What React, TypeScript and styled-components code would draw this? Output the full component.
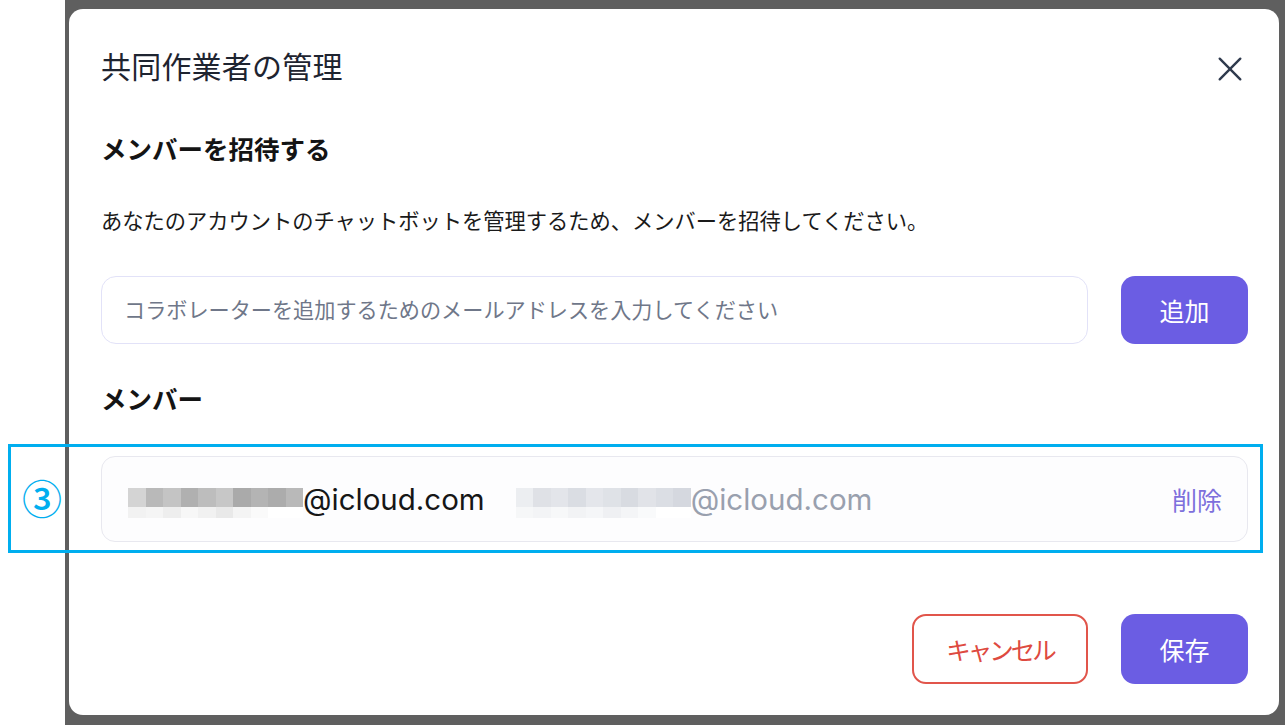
import React from "react";
import styled, { createGlobalStyle } from "styled-components";

const GlobalStyle = createGlobalStyle`
  html, body { margin: 0; padding: 0; background: #ffffff; }
  body { font-family: Inter, "Noto Sans CJK JP", sans-serif; }
  * { box-sizing: border-box; }
`;

const Page = styled.div`
  position: relative;
  width: 1285px;
  height: 725px;
  display: flex;
  overflow: hidden;
  background: #ffffff;
`;

const Gutter = styled.div`
  width: 65px;
  flex: none;
  background: #ffffff;
`;

const Overlay = styled.div`
  flex: 1;
  display: flex;
  background: #5f5f5f;
  padding: 9px 6px 10px 4px;
`;

const Dialog = styled.div`
  flex: 1;
  display: flex;
  flex-direction: column;
  background: #ffffff;
  border-radius: 14px;
  padding: 38px 31px 31px 32px;
  font-family: Inter, "Noto Sans CJK JP", sans-serif;
`;

const TitleRow = styled.div`
  display: flex;
  align-items: center;
  justify-content: space-between;
  height: 40px;
`;

const Title = styled.h1`
  margin: 0;
  font-size: 30px;
  font-weight: 400;
  line-height: 40px;
  color: #1e2430;
  letter-spacing: 0.2px;
`;

const CloseButton = styled.button`
  width: 36px;
  height: 36px;
  display: flex;
  align-items: center;
  justify-content: center;
  background: none;
  border: none;
  padding: 0;
  margin-top: 4px;
  color: #2f3a4d;
  cursor: pointer;
`;

const Heading = styled.h2<{ $mt: number }>`
  margin: ${(p) => p.$mt}px 0 0;
  font-size: 25.5px;
  font-weight: 700;
  line-height: 36px;
  color: #141414;
`;

const Description = styled.p`
  margin: 38px 0 0;
  font-size: 21.25px;
  line-height: 30px;
  color: #1a1a1a;
`;

const InviteRow = styled.div`
  display: flex;
  gap: 33px;
  margin-top: 40px;
`;

const EmailInput = styled.input`
  flex: 1;
  height: 68px;
  border: 1.5px solid #e2e2f8;
  border-radius: 15px;
  padding: 0 22px;
  font-family: Inter, "Noto Sans CJK JP", sans-serif;
  font-size: 21.15px;
  color: #222;
  outline: none;
  &::placeholder {
    color: #6f7789;
  }
`;

const PrimaryButton = styled.button`
  width: 127px;
  height: 68px;
  border: none;
  border-radius: 14px;
  background: #6b5de3;
  color: #ffffff;
  font-family: Inter, "Noto Sans CJK JP", sans-serif;
  font-size: 25px;
  cursor: pointer;
`;

const MemberRow = styled.div`
  margin-top: 38px;
  height: 86px;
  display: flex;
  align-items: center;
  border: 1.5px solid #e8e8ef;
  border-radius: 14px;
  background: #fdfdfe;
  padding: 0 25px 0 26px;
`;

const Emails = styled.div`
  flex: 1;
  display: flex;
  align-items: center;
  gap: 31px;
`;

const Email = styled.span`
  display: inline-flex;
  align-items: center;
`;

const EmailDomain = styled.span<{ $muted?: boolean }>`
  font-family: Inter, sans-serif;
  font-size: 29.5px;
  line-height: 40px;
  color: ${(p) => (p.$muted ? "#99a0ae" : "#161616")};
`;

const Mosaic = styled.span`
  display: inline-flex;
  flex-direction: column;
  margin-top: 8px;
`;

const MosaicBand = styled.span<{ $h: number }>`
  display: flex;
  height: ${(p) => p.$h}px;
`;

const MosaicCell = styled.span<{ $c: string; $w: number }>`
  width: ${(p) => p.$w}px;
  height: 100%;
  background: ${(p) => p.$c};
`;

const DeleteLink = styled.button`
  background: none;
  border: none;
  padding: 0;
  font-family: Inter, "Noto Sans CJK JP", sans-serif;
  font-size: 25px;
  color: #7d70dc;
  cursor: pointer;
`;

const Footer = styled.div`
  margin-top: auto;
  display: flex;
  justify-content: flex-end;
  gap: 33px;
`;

const CancelButton = styled.button`
  width: 176px;
  height: 70px;
  border: 2px solid #e1554b;
  border-radius: 14px;
  background: #ffffff;
  color: #de4a40;
  font-family: Inter, "Noto Sans CJK JP", sans-serif;
  font-size: 24.5px;
  letter-spacing: -3px;
  cursor: pointer;
`;

const SaveButton = styled(PrimaryButton)`
  height: 70px;
`;

const Annotation = styled.div`
  position: absolute;
  left: 8px;
  top: 444px;
  width: 1255px;
  height: 109px;
  border: 3px solid #00aeef;
  pointer-events: none;
`;

const AnnotationNumber = styled.span`
  position: absolute;
  left: 22px;
  top: 475px;
  font-family: "Noto Sans CJK JP", sans-serif;
  font-size: 40px;
  font-weight: 500;
  line-height: 44px;
  color: #00aeef;
`;

type MosaicProps = { top: string[]; bottom: string[]; w: number };

const PixelMosaic: React.FC<MosaicProps> = ({ top, bottom, w }) => (
  <Mosaic aria-hidden>
    <MosaicBand $h={19}>
      {top.map((c, i) => (
        <MosaicCell key={i} $c={c} $w={w} />
      ))}
    </MosaicBand>
    <MosaicBand $h={11}>
      {bottom.map((c, i) => (
        <MosaicCell key={i} $c={c} $w={w} />
      ))}
    </MosaicBand>
  </Mosaic>
);

const darkTop = ["#d4d4d4", "#b9b9b9", "#c4c4c4", "#b0b0b0", "#bdbdbd", "#c7c7c7", "#aaaaaa", "#b4b4b4", "#acacac", "#b9b9b9"];
const darkBottom = ["#f2f2f2", "#f5f5f5", "#eeeeee", "#f7f7f7", "#f1f1f1", "#e9e9e9", "#f4f4f4", "#fafafa", "#ffffff", "#ffffff"];
const lightTop = ["#eceef1", "#dfe1e6", "#e3e5ea", "#dadde3", "#e4e6eb", "#dfe2e7", "#d8dbe1", "#e1e3e8", "#dbdee4", "#d5d8df"];
const lightBottom = ["#f6f7f8", "#f3f4f6", "#f7f8f9", "#f2f3f5", "#f5f6f8", "#eff0f3", "#f4f5f7", "#f9fafb", "#ffffff", "#ffffff"];

const CloseIcon = () => (
  <svg width="26" height="26" viewBox="0 0 24 24" fill="none" stroke="currentColor" strokeWidth="2.2" strokeLinecap="round">
    <path d="M2.5 2.5 L21.5 21.5" />
    <path d="M21.5 2.5 L2.5 21.5" />
  </svg>
);

export default function App() {
  return (
    <>
      <GlobalStyle />
      <Page>
        <Gutter />
        <Overlay>
          <Dialog>
            <TitleRow>
              <Title>共同作業者の管理</Title>
              <CloseButton aria-label="閉じる">
                <CloseIcon />
              </CloseButton>
            </TitleRow>
            <Heading $mt={45}>メンバーを招待する</Heading>
            <Description>
              あなたのアカウントのチャットボットを管理するため、メンバーを招待してください。
            </Description>
            <InviteRow>
              <EmailInput placeholder="コラボレーターを追加するためのメールアドレスを入力してください" />
              <PrimaryButton>追加</PrimaryButton>
            </InviteRow>
            <Heading $mt={38}>メンバー</Heading>
            <MemberRow>
              <Emails>
                <Email>
                  <PixelMosaic top={darkTop} bottom={darkBottom} w={17.5} />
                  <EmailDomain>@icloud.com</EmailDomain>
                </Email>
                <Email>
                  <PixelMosaic top={lightTop} bottom={lightBottom} w={17.5} />
                  <EmailDomain $muted>@icloud.com</EmailDomain>
                </Email>
              </Emails>
              <DeleteLink>削除</DeleteLink>
            </MemberRow>
            <Footer>
              <CancelButton>キャンセル</CancelButton>
              <SaveButton>保存</SaveButton>
            </Footer>
          </Dialog>
        </Overlay>
        <Annotation />
        <AnnotationNumber>③</AnnotationNumber>
      </Page>
    </>
  );
}
